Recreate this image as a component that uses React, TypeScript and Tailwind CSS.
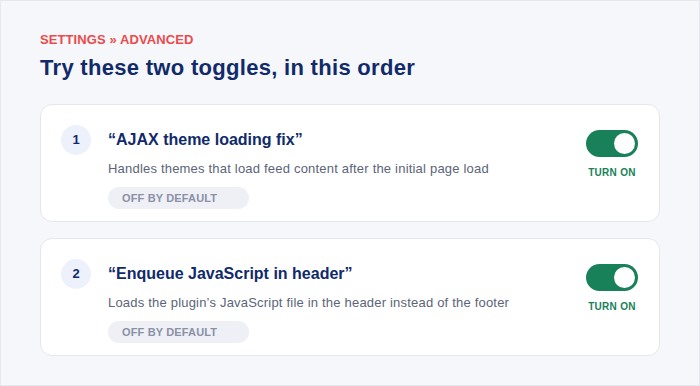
import React from "react";

type Item = { n: number; title: string; desc: string };

const items: Item[] = [
  { n: 1, title: "“AJAX theme loading fix”", desc: "Handles themes that load feed content after the initial page load" },
  { n: 2, title: "“Enqueue JavaScript in header”", desc: "Loads the plugin’s JavaScript file in the header instead of the footer" },
];

function Card({ item }: { item: Item }) {
  return (
    <div className="flex items-start rounded-[12px] border border-[#e4e7ee] bg-white pl-5 pr-[21px] pt-5 pb-[12px]">
      <div className="flex h-[30px] w-[30px] shrink-0 items-center justify-center rounded-full bg-[#edf1fb] text-[13px] font-bold text-[#102a6b]">
        {item.n}
      </div>
      <div className="ml-[17px] mt-[3px] flex flex-1 flex-col items-start">
        <div className="text-[16px] leading-[24px] font-bold text-[#102a6b]">{item.title}</div>
        <div className="mt-[7px] text-[13px] leading-[20px] tracking-[0.2px] text-[#5b6479]">{item.desc}</div>
        <div className="mt-[8px] flex h-[22px] w-[141px] items-center rounded-full bg-[#eef0f6] pl-[14px] text-[11px] font-bold tracking-[0.15px] text-[#8a90a5]">
          OFF BY DEFAULT
        </div>
      </div>
      <div className="mt-[5px] flex flex-col items-center">
        <div className="flex h-[27px] w-[52px] items-center justify-end rounded-full bg-[#188159] pr-[3px]">
          <div className="h-[21px] w-[21px] rounded-full bg-white" />
        </div>
        <div className="mt-[9px] text-[10px] leading-[14px] font-bold tracking-[0.3px] text-[#188159]">TURN ON</div>
      </div>
    </div>
  );
}

export default function App() {
  return (
    <div
      className="h-[386px] w-[700px] overflow-hidden border border-[#e6e8ee] bg-[#f6f7fa] px-[39px] pt-[31px]"
      style={{ fontFamily: '"Liberation Sans", Arial, sans-serif' }}
    >
      <div className="text-[13px] leading-[16px] font-bold tracking-[0.1px] text-[#ea4b4b]">SETTINGS » ADVANCED</div>
      <div className="mt-[6px] text-[22px] leading-[28px] font-bold tracking-[0.3px] text-[#102a6b]">Try these two toggles, in this order</div>
      <div className="mt-[22px] flex flex-col gap-[16px]">
        {items.map((it) => (
          <Card key={it.n} item={it} />
        ))}
      </div>
    </div>
  );
}
